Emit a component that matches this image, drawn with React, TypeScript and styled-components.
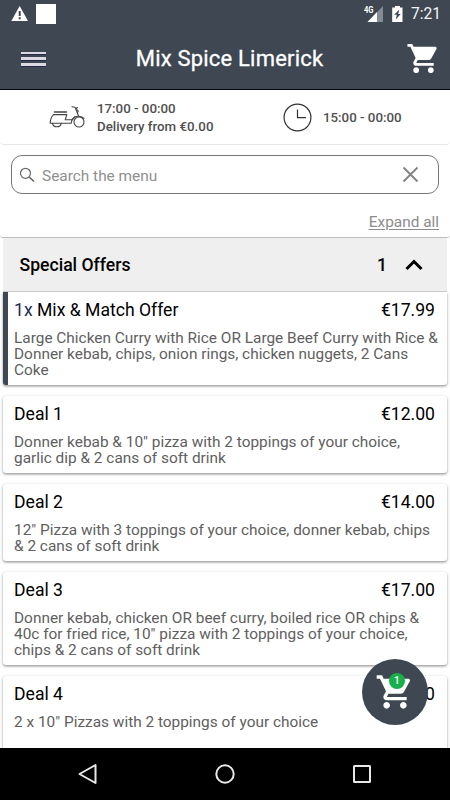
import React from 'react';
import styled, { createGlobalStyle } from 'styled-components';

const GlobalStyle = createGlobalStyle`
  * { box-sizing: border-box; }
  html, body { margin: 0; padding: 0; }
  body { font-family: Roboto, sans-serif; background: #fff; overflow: hidden; }
`;

const Screen = styled.div`
  width: 450px;
  height: 800px;
  display: flex;
  flex-direction: column;
  position: relative;
  background: #fff;
  overflow: hidden;
`;

const Header = styled.header`
  flex: none;
  height: 90px;
  background: #3e4752;
  border-bottom: 1px solid #05070f;
  color: #fff;
`;

const StatusBar = styled.div`
  height: 28px;
  display: flex;
  justify-content: space-between;
  padding: 4px 9px 0 11px;
`;

const StatusGroup = styled.div<{ $gap: number }>`
  display: flex;
  align-items: flex-start;
  gap: ${p => p.$gap}px;
`;

const WhiteSquare = styled.div`
  width: 20px;
  height: 20px;
  background: #fff;
`;

const Time = styled.span`
  font-size: 15.6px;
  line-height: 21px;
  font-weight: 400;
  color: #f4f5f6;
`;

const TitleBar = styled.div`
  height: 61px;
  display: grid;
  grid-template-columns: 60px 1fr 60px;
  align-items: center;
  padding-left: 9px;
`;

const Title = styled.h1`
  margin: 0;
  font-size: 22px;
  line-height: 28px;
  font-weight: 400;
  letter-spacing: 0.2px;
  -webkit-text-stroke: 0.3px #fff;
  text-align: center;
  white-space: nowrap;
`;

const CartLink = styled.div`
  height: 35px;
  margin-left: 16px;
`;

const MenuButton = styled.div`
  width: 25px;
  height: 14px;
  margin-left: 12px;
  display: flex;
  flex-direction: column;
  justify-content: space-between;
`;

const MenuLine = styled.span`
  height: 2.5px;
  background: #dcd9e4;
  box-shadow: 0 1px 0 #222a48;
`;

const Hours = styled.section`
  flex: none;
  height: 55px;
  display: flex;
  align-items: center;
  padding-left: 49px;
  color: #505050;
  border-bottom: 1px solid #e8e8e8;
  border-radius: 0 0 4px 4px;
`;

const HoursText = styled.div<{ $width: number }>`
  margin-left: 11px;
  padding-top: 2px;
  width: ${p => p.$width}px;
  font-size: 13.3px;
  line-height: 18px;
  font-weight: 500;
  white-space: nowrap;
`;

const SearchArea = styled.section`
  flex: none;
  height: 93px;
  padding: 10px 11px 0;
  border-bottom: 1px solid #bdbdbd;
  border-radius: 0 0 3px 3px;
  display: flex;
  flex-direction: column;
`;

const SearchBox = styled.div`
  height: 39px;
  border: 1px solid #777;
  border-radius: 11px;
  display: flex;
  align-items: center;
  padding: 0 19px 0 7px;
`;

const Placeholder = styled.span`
  flex: 1;
  margin: 2px 0 0 7px;
  font-size: 15.4px;
  color: #8f8f8f;
`;

const ExpandAll = styled.a`
  align-self: flex-end;
  margin-top: 18px;
  font-size: 15.4px;
  line-height: 20px;
  color: #8c8c8c;
  text-decoration: underline;
  text-decoration-thickness: 1px;
  text-underline-offset: 2px;
`;

const Category = styled.div`
  flex: none;
  height: 54px;
  margin: 0 3px;
  padding: 0 24px 0 16.500px;
  display: flex;
  align-items: center;
  background: #efefef;
  border-bottom: 1px solid #c9c9c9;
  font-size: 17.6px;
  font-weight: 500;
  color: #000;
`;

const CategoryName = styled.span`
  flex: 1;
`;

const Chevron = styled.svg`
  margin-left: 18px;
`;

const List = styled.main`
  flex: none;
  height: 456px;
  padding: 0 3px;
  overflow: hidden;
  display: flex;
  flex-direction: column;
  gap: 11px;
`;

const Card = styled.article<{ $height: number; $selected?: boolean }>`
  flex: none;
  height: ${p => p.$height}px;
  padding: ${p => (p.$selected ? '8px 0 0 6px' : '8px 0 0 11px')};
  background: #fff;
  border-left: ${p => (p.$selected ? '5px solid #3e4752' : '0')};
  border-radius: ${p => (p.$selected ? '0 0 3px 3px' : '3px')};
  box-shadow: 0 1px 3px rgba(0, 0, 0, 0.36), 0 2px 2px rgba(0, 0, 0, 0.1);
`;

const CardTop = styled.div`
  display: flex;
  justify-content: space-between;
  padding-right: 12px;
  font-size: 17.6px;
  line-height: 20px;
  color: #000;
`;

const Quantity = styled.span`
  color: #1d2b50;
`;

const Description = styled.p`
  margin: 10px 0 0;
  font-size: 15.4px;
  line-height: 16px;
  color: #606060;
  white-space: pre;
`;

const CartFab = styled.button`
  position: absolute;
  left: 362px;
  top: 659px;
  width: 66px;
  height: 66px;
  padding: 0;
  border: 0;
  border-radius: 50%;
  background: #3e4752;
  display: flex;
  align-items: center;
  justify-content: center;
`;

const Badge = styled.span`
  position: absolute;
  left: 27px;
  top: 14px;
  width: 16px;
  height: 16px;
  border-radius: 50%;
  background: #17b14b;
  color: #fff;
  font: 500 11px/16px Roboto, sans-serif;
  text-align: center;
`;

const NavBar = styled.nav`
  flex: none;
  height: 52px;
  background: #000;
  display: flex;
  align-items: center;
  justify-content: space-between;
  padding: 0 78px 0 77px;
`;

const CART =
  'M7 18c-1.1 0-1.99.9-1.99 2S5.9 22 7 22s2-.9 2-2-.9-2-2-2zM1 2v2h2l3.6 7.59-1.35 2.45c-.16.28-.25.61-.25.96 0 1.1.9 2 2 2h12v-2H7.42c-.14 0-.25-.11-.25-.25l.03-.12.9-1.63h7.45c.75 0 1.41-.41 1.75-1.03l3.58-6.49A1 1 0 0 0 20 4H5.21l-.94-2H1zm16 16c-1.1 0-1.99.9-1.99 2s.89 2 1.99 2 2-.9 2-2-.9-2-2-2z';

const CartIcon = ({ size }: { size: number }) => (
  <svg width={size} height={size} viewBox="0 0 24 24" fill="#fff">
    <path d={CART} />
  </svg>
);

const WarningIcon = () => (
  <svg width="18" height="18" viewBox="0 0 18 18">
    <path d="M8.7 2 17 17H.3z" fill="#fff" />
    <path d="M8.7 7v5M8.7 13.3v2" stroke="#3e4752" strokeWidth="2" />
  </svg>
);

const SignalIcon = () => (
  <svg width="20" height="20" viewBox="0 0 20 20">
    <path d="M19 2v16H3.5z" fill="#858b94" />
    <path d="M13 8v10H3.5z" fill="#fff" />
    <text x="0" y="8.7" fontSize="8.2" fontWeight="700" fill="#fff" textLength="9.5" lengthAdjust="spacingAndGlyphs">4G</text>
  </svg>
);

const BatteryIcon = () => (
  <svg width="11" height="20" viewBox="0 0 11 20">
    <path d="M3 2h5v1.600h2.500V18H.2V3.600H3z" fill="#fff" />
    <path d="M7.300 5.500 2.200 10.800h2.600L3.700 15.500l5-5.600H6.200z" fill="#3e4752" />
  </svg>
);

const ScooterIcon = () => (
  <svg width="37" height="24" viewBox="0 0 37 24" fill="none" stroke="#444" strokeWidth="1.1" strokeLinejoin="round" strokeLinecap="round">
    <path d="M5.500 7h12" strokeWidth="1.500" />
    <path d="M4.500 9.600h13.300l-1.600 5.200h6.500M4.500 9.600C2.500 11.500 1.300 15 1.200 18.300h21c.3-4 3.200-7.100 7-7.100 2.500 0 4.300.7 5.800 2.100" />
    <path d="M3.500 18.300c.4 2.200 2.100 3.500 4.300 3.500s4-1.300 4.400-3.500" />
    <circle cx="30" cy="17" r="5" />
    <path d="M23 1.700l3 .6 3.500 8.400M28.500 2.500l-2 1.500M28 4.800c1.300.6 1.500 1.700.7 2.500M22.700 14.800l3.300-3.200" />
  </svg>
);

const ClockIcon = () => (
  <svg width="29" height="29" viewBox="0 0 29 29" fill="none" stroke="#333" strokeWidth="1.200">
    <circle cx="14.500" cy="14.500" r="13.400" />
    <path d="M14.500 6.500v8.200h8.500" />
  </svg>
);

const SearchIcon = () => (
  <svg width="16" height="16" viewBox="0 0 16 16" fill="none" stroke="#666" strokeWidth="1.200">
    <circle cx="6.500" cy="6.300" r="5" />
    <path d="m10.200 10 4.800 4.500" strokeWidth="1.700" />
  </svg>
);

const ClearIcon = () => (
  <svg width="17" height="17" viewBox="0 0 17 17" stroke="#848484" strokeWidth="1.900">
    <path d="m1.500 1.500 14 14m0-14-14 14" />
  </svg>
);

const offers = [
  { name: 'Mix & Match Offer', quantity: '1x', price: '€17.99', height: 93, text: 'Large Chicken Curry with Rice OR Large Beef Curry with Rice &\nDonner kebab, chips, onion rings, chicken nuggets, 2 Cans\nCoke' },
  { name: 'Deal 1', price: '€12.00', height: 77, text: 'Donner kebab & 10" pizza with 2 toppings of your choice,\ngarlic dip & 2 cans of soft drink' },
  { name: 'Deal 2', price: '€14.00', height: 77, text: '12" Pizza with 3 toppings of your choice, donner kebab, chips\n& 2 cans of soft drink' },
  { name: 'Deal 3', price: '€17.00', height: 93, text: 'Donner kebab, chicken OR beef curry, boiled rice OR chips &\n40c for fried rice, 10" pizza with 2 toppings of your choice,\nchips & 2 cans of soft drink' },
  { name: 'Deal 4', price: '€18.00', height: 77, text: '2 x 10" Pizzas with 2 toppings of your choice' },
];

export default function App() {
  return (
    <Screen>
      <GlobalStyle />
      <Header>
        <StatusBar>
          <StatusGroup $gap={7}>
            <WarningIcon />
            <WhiteSquare />
          </StatusGroup>
          <StatusGroup $gap={8}>
            <SignalIcon />
            <BatteryIcon />
            <Time>7:21</Time>
          </StatusGroup>
        </StatusBar>
        <TitleBar>
          <MenuButton>
            <MenuLine />
            <MenuLine />
            <MenuLine />
          </MenuButton>
          <Title>Mix Spice Limerick</Title>
          <CartLink>
            <CartIcon size={35} />
          </CartLink>
        </TitleBar>
      </Header>
      <Hours>
        <ScooterIcon />
        <HoursText $width={186}>17:00 - 00:00<br />Delivery from €0.00</HoursText>
        <ClockIcon />
        <HoursText $width={80}>15:00 - 00:00</HoursText>
      </Hours>
      <SearchArea>
        <SearchBox>
          <SearchIcon />
          <Placeholder>Search the menu</Placeholder>
          <ClearIcon />
        </SearchBox>
        <ExpandAll>Expand all</ExpandAll>
      </SearchArea>
      <Category>
        <CategoryName>Special Offers</CategoryName>
        <span>1</span>
        <Chevron width="18" height="12" viewBox="0 0 18 12" fill="none" stroke="#000" strokeWidth="3">
          <path d="m1.500 10 7.500-7.500 7.500 7.500" />
        </Chevron>
      </Category>
      <List>
        {offers.map(o => (
          <Card key={o.name} $height={o.height} $selected={!!o.quantity}>
            <CardTop>
              <span>{o.quantity && <Quantity>{o.quantity} </Quantity>}{o.name}</span>
              <span>{o.price}</span>
            </CardTop>
            <Description>{o.text}</Description>
          </Card>
        ))}
      </List>
      <CartFab aria-label="Cart">
        <CartIcon size={40} />
        <Badge>1</Badge>
      </CartFab>
      <NavBar>
        <svg width="21" height="22" viewBox="0 0 21 22" fill="none" stroke="#e8e8e8" strokeWidth="2" strokeLinejoin="round">
          <path d="M18.500 2v18L2.500 11z" />
        </svg>
        <svg width="22" height="22" viewBox="0 0 22 22" fill="none" stroke="#e8e8e8" strokeWidth="2">
          <circle cx="11" cy="11" r="8.700" />
        </svg>
        <svg width="20" height="20" viewBox="0 0 20 20" fill="none" stroke="#e8e8e8" strokeWidth="2">
          <rect x="2" y="2" width="16" height="16" rx="0.500" />
        </svg>
      </NavBar>
    </Screen>
  );
}
